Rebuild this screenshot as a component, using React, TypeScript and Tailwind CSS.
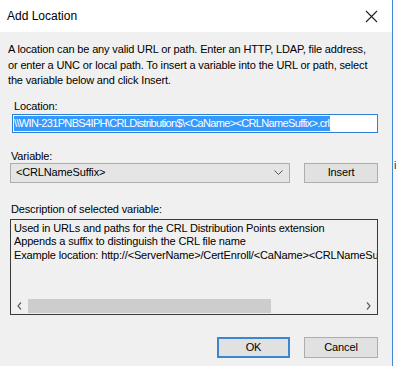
import React from "react";

export default function App() {
  const font = { fontFamily: '"Liberation Sans", Arial, sans-serif' };
  return (
    <div className="flex h-[366px] w-[398px] overflow-hidden bg-[#fbfbfb]" style={font}>
      <div className="flex h-full w-[393px] flex-col border-r border-[#3d8bd8] bg-[#f0f0f0] text-[11px] tracking-[-0.15px] text-black">
        <div className="flex h-[32px] items-center justify-between bg-white pl-[7px] pr-[12px]">
          <span className="text-[12px] tracking-normal text-black">Add Location</span>
          <svg width="13" height="13" viewBox="0 0 13 13" className="mr-[2px]">
            <path d="M1 1 L12 12 M12 1 L1 12" stroke="#222" strokeWidth="1.1" />
          </svg>
        </div>
        <p className="mt-[10px] whitespace-nowrap pl-[8px] leading-[15.5px]">
          A location can be any valid URL or path. Enter an HTTP, LDAP, file address,
          <br />
          or enter a UNC or local path. To insert a variable into the URL or path, select
          <br />
          the variable below and click Insert.
        </p>
        <div className="mt-[10px] pl-[14px] leading-[14px]">Location:</div>
        <div className="ml-[12px] mt-[1px] flex h-[19px] w-[366px] items-center overflow-hidden border border-[#2f7fd3] bg-white pl-[1px]">
          <span className="whitespace-nowrap bg-[#3399ff] pr-[1px] leading-[15px] tracking-[-0.65px] text-white">
            {"\\\\WIN-231PNBS4IPH\\CRLDistribution$\\<CaName><CRLNameSuffix>.crl"}
          </span>
        </div>
        <div className="mt-[16px] pl-[11px] leading-[14px]">Variable:</div>
        <div className="ml-[10px] flex items-center gap-[14px]">
          <div className="flex h-[20px] w-[280px] items-center justify-between border border-[#adadad] bg-[#e5e5e5] pl-[5px] pr-[6px]">
            <span>{"<CRLNameSuffix>"}</span>
            <svg width="9" height="6" viewBox="0 0 9 6">
              <path d="M0.5 0.5 L4.5 4.5 L8.5 0.5" stroke="#555" fill="none" strokeWidth="1" />
            </svg>
          </div>
          <div className="flex h-[20px] w-[74px] items-center justify-center border border-[#adadad] bg-[#e1e1e1]">
            Insert
          </div>
        </div>
        <div className="mt-[19px] pl-[11px] leading-[14px]">Description of selected variable:</div>
        <div className="ml-[10px] mt-[3px] flex h-[96px] w-[368px] flex-col border border-[#3a3a3a] bg-[#f0f0f0]">
          <div className="flex-1 overflow-hidden whitespace-nowrap pl-[3px] pt-[2px] leading-[13.5px]">
            <div>Used in URLs and paths for the CRL Distribution Points extension</div>
            <div>Appends a suffix to distinguish the CRL file name</div>
            <div>{"Example location: http://<ServerName>/CertEnroll/<CaName><CRLNameSuffix><DeltaCRLAllowed>.crl"}</div>
          </div>
          <div className="flex h-[16px] items-center bg-[#f0f0f0]">
            <div className="flex w-[17px] justify-center">
              <svg width="5" height="8" viewBox="0 0 5 8"><path d="M4 0.5 L1 4 L4 7.5" stroke="#606060" fill="none" strokeWidth="1.2" /></svg>
            </div>
            <div className="h-[14px] w-[243px] bg-[#cdcdcd]" />
            <div className="flex-1" />
            <div className="flex w-[17px] justify-center">
              <svg width="5" height="8" viewBox="0 0 5 8"><path d="M1 0.5 L4 4 L1 7.5" stroke="#606060" fill="none" strokeWidth="1.2" /></svg>
            </div>
          </div>
        </div>
        <div className="mt-[22px] flex justify-end gap-[14px] pr-[14px]">
          <div className="flex h-[21px] w-[73px] items-center justify-center border-2 border-[#3c85d0] bg-[#e1e1e1]">
            OK
          </div>
          <div className="flex h-[21px] w-[74px] items-center justify-center border border-[#adadad] bg-[#e1e1e1]">
            Cancel
          </div>
        </div>
      </div>
      <div className="relative flex-1 bg-[#fbfbfb]">
        <span className="absolute left-[1px] top-[157px] text-[11px] text-[#333]">i</span>
      </div>
    </div>
  );
}
